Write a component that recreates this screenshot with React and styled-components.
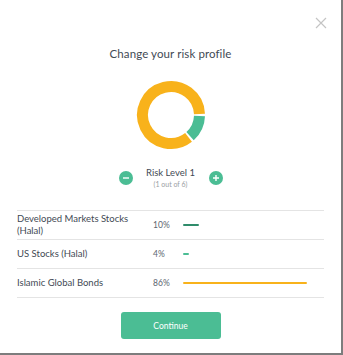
import React from 'react';
import styled, { createGlobalStyle } from 'styled-components';

const GlobalStyle = createGlobalStyle`
  html, body {
    margin: 0;
    padding: 0;
    background: #7d7d7d;
    font-family: Lato, "Open Sans", sans-serif;
  }
`;

const Modal = styled.div`
  position: relative;
  width: 341px;
  height: 353px;
  background: #fff;
  box-sizing: border-box;
  padding: 46px 17px 0 17px;
  display: flex;
  flex-direction: column;
  align-items: center;
`;

const Close = styled.button`
  position: absolute;
  top: 17px;
  right: 14px;
  width: 12px;
  height: 12px;
  padding: 0;
  border: 0;
  background: none;
  cursor: pointer;
`;

const Title = styled.h2`
  margin: 0;
  font-size: 11.5px;
  line-height: 15px;
  font-weight: 400;
  color: #3f4a54;
  letter-spacing: 0.1px;
`;

const Chart = styled.svg`
  margin-top: 19px;
  display: block;
`;

const LevelRow = styled.div`
  margin-top: 17px;
  display: flex;
  align-items: center;
  gap: 11px;
`;

const RoundButton = styled.button`
  width: 14px;
  height: 14px;
  border-radius: 50%;
  border: 0;
  padding: 0;
  background: #4bbd94;
  display: flex;
  align-items: center;
  justify-content: center;
  cursor: pointer;
`;

const Level = styled.div`
  display: flex;
  flex-direction: column;
  align-items: center;
  width: 54px;
`;

const LevelName = styled.span`
  font-size: 9.5px;
  color: #3f4a54;
  line-height: 12px;
`;

const LevelSub = styled.span`
  font-size: 7px;
  color: #9a9ea3;
  line-height: 10px;
`;

const Table = styled.div`
  margin-top: 21px;
  width: 100%;
  border-top: 1px solid #e4e4e4;
`;

const Row = styled.div`
  display: grid;
  grid-template-columns: 136px 30px 1fr;
  align-items: center;
  height: 28px;
  border-bottom: 1px solid #e4e4e4;
`;

const Name = styled.span`
  max-width: 112px;
  font-size: 9.5px;
  line-height: 12.5px;
  color: #3f4a54;
`;

const Percent = styled.span`
  font-size: 8.5px;
  color: #5c6670;
`;

const Track = styled.div`
  padding-right: 18px;
`;

const Bar = styled.div`
  height: 2px;
  border-radius: 1px;
  background: ${p => p.color};
`;

const Continue = styled.button`
  margin-top: 14px;
  width: 100px;
  height: 27px;
  border: 0;
  border-radius: 3px;
  background: #4bbd94;
  color: #fff;
  font-family: Lato, "Open Sans", sans-serif;
  font-size: 8.5px;
  cursor: pointer;
`;

const holdings = [
  { name: 'Developed Markets Stocks (Halal)', pct: 10, color: '#2f8c6b', width: 16 },
  { name: 'US Stocks (Halal)', pct: 4, color: '#4bbd94', width: 6 },
  { name: 'Islamic Global Bonds', pct: 86, color: '#f8b21b', width: 124 },
];

const arc = (cx, cy, r, a0, a1) => {
  const p = a => [cx + r * Math.sin(a), cy - r * Math.cos(a)];
  const [x0, y0] = p(a0);
  const [x1, y1] = p(a1);
  const large = a1 - a0 > Math.PI ? 1 : 0;
  return `M${x0} ${y0} A${r} ${r} 0 ${large} 1 ${x1} ${y1}`;
};

const Donut = () => {
  const deg = d => (d * Math.PI) / 180;
  const gap = deg(2);
  return (
    <Chart width="70" height="70" viewBox="0 0 70 70">
      <path d={arc(35, 35, 28.5, deg(90) + gap, deg(140) - gap)} stroke="#4bbd94" strokeWidth="11" fill="none" />
      <path d={arc(35, 35, 28.5, deg(140) + gap, deg(450) - gap)} stroke="#f8b21b" strokeWidth="11" fill="none" />
    </Chart>
  );
};

const App = () => (
  <>
    <GlobalStyle />
    <Modal>
      <Close aria-label="Close">
        <svg width="12" height="12" viewBox="0 0 12 12">
          <path d="M1 1L11 11M11 1L1 11" stroke="#c4c4c4" strokeWidth="1.2" />
        </svg>
      </Close>
      <Title>Change your risk profile</Title>
      <Donut />
      <LevelRow>
        <RoundButton aria-label="Lower risk">
          <svg width="8" height="8" viewBox="0 0 8 8">
            <path d="M1 4H7" stroke="#fff" strokeWidth="1.4" />
          </svg>
        </RoundButton>
        <Level>
          <LevelName>Risk Level 1</LevelName>
          <LevelSub>(1 out of 6)</LevelSub>
        </Level>
        <RoundButton aria-label="Higher risk">
          <svg width="8" height="8" viewBox="0 0 8 8">
            <path d="M1 4H7M4 1V7" stroke="#fff" strokeWidth="1.4" />
          </svg>
        </RoundButton>
      </LevelRow>
      <Table>
        {holdings.map(h => (
          <Row key={h.name}>
            <Name>{h.name}</Name>
            <Percent>{h.pct}%</Percent>
            <Track>
              <Bar color={h.color} style={{ width: h.width }} />
            </Track>
          </Row>
        ))}
      </Table>
      <Continue>Continue</Continue>
    </Modal>
  </>
);

export default App;
